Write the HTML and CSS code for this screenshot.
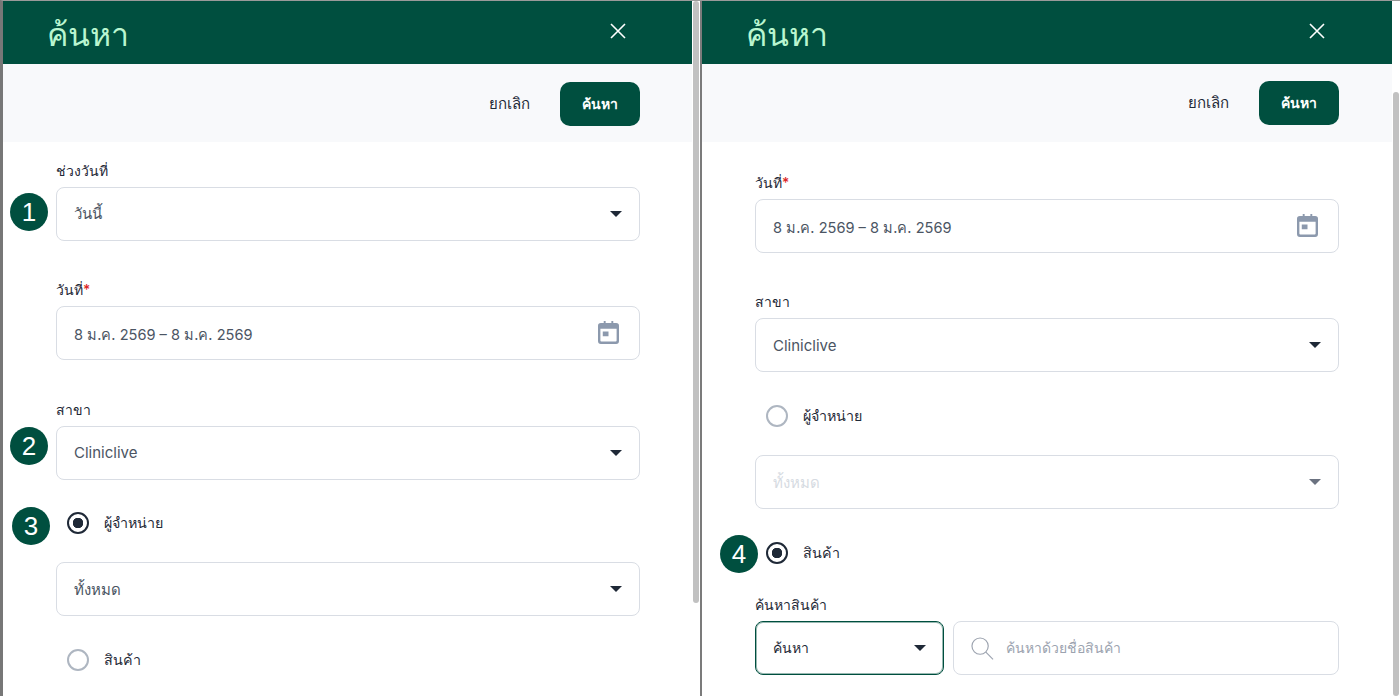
FILE: index.html
```html
<!DOCTYPE html>
<html lang="th">
<head>
<meta charset="utf-8">
<title>ค้นหา</title>
<link rel="stylesheet" href="styles.css">
</head>
<body>
<svg class="defs" width="0" height="0">
  <symbol id="caret" viewBox="0 0 12 6"><path d="M0 0h12L6 6z"/></symbol>
  <symbol id="close" viewBox="0 0 18 18"><path d="M2 2l14 14M16 2L2 16" fill="none" stroke="currentColor" stroke-width="1.6"/></symbol>
  <symbol id="cal" viewBox="0 0 22 24"><path fill-rule="evenodd" d="M3 2h3V0h2v2h6V0h2v2h3a3 3 0 0 1 3 3v16a3 3 0 0 1-3 3H3a3 3 0 0 1-3-3V5a3 3 0 0 1 3-3zM2.500 8v12.500a1 1 0 0 0 1 1h15a1 1 0 0 0 1-1V8zM5 11h6v5H5z"/></symbol>
  <symbol id="search" viewBox="0 0 24 24"><circle cx="9.500" cy="9.500" r="8.500" fill="none" stroke="currentColor" stroke-width="1.200"/><path d="M15.500 15.800l7.500 7.500" fill="none" stroke="currentColor" stroke-width="1.200"/></symbol>
</svg>
<main class="screen">
  <section class="panel panel-left">
    <div class="panel-main">
      <header class="head">
        <h1 class="title">ค้นหา</h1>
        <svg class="close"><use href="#close"/></svg>
      </header>
      <div class="toolbar">
        <span class="cancel">ยกเลิก</span>
        <span class="submit">ค้นหา</span>
      </div>
      <form class="form form-left">
        <div class="field">
          <span class="badge badge-1">1</span>
          <label class="label">ช่วงวันที่</label>
          <div class="control"><span>วันนี้</span><svg class="caret"><use href="#caret"/></svg></div>
        </div>
        <div class="field gap-date">
          <label class="label">วันที่<em class="req">*</em></label>
          <div class="control"><span class="nudge date">8 ม.ค. 2569 – 8 ม.ค. 2569</span><svg class="cal"><use href="#cal"/></svg></div>
        </div>
        <div class="field gap-branch">
          <span class="badge badge-2">2</span>
          <label class="label">สาขา</label>
          <div class="control"><span class="lift">Cliniclive</span><svg class="caret"><use href="#caret"/></svg></div>
        </div>
        <div class="radio-row row-first">
          <span class="badge badge-3">3</span>
          <span class="radio radio-on"></span><span class="radio-text">ผู้จำหน่าย</span>
        </div>
        <div class="control after-radio"><span class="nudge">ทั้งหมด</span><svg class="caret"><use href="#caret"/></svg></div>
        <div class="radio-row row-second">
          <span class="radio"></span><span class="radio-text">สินค้า</span>
        </div>
      </form>
    </div>
    <div class="scroll"><div class="thumb thumb-left"></div></div>
  </section>
  <div class="divider"></div>
  <section class="panel panel-right">
    <div class="panel-main">
      <header class="head head-right">
        <h1 class="title">ค้นหา</h1>
        <svg class="close"><use href="#close"/></svg>
      </header>
      <div class="toolbar">
        <span class="cancel">ยกเลิก</span>
        <span class="submit">ค้นหา</span>
      </div>
      <form class="form form-right">
        <div class="field">
          <label class="label">วันที่<em class="req">*</em></label>
          <div class="control"><span class="nudge date">8 ม.ค. 2569 – 8 ม.ค. 2569</span><svg class="cal"><use href="#cal"/></svg></div>
        </div>
        <div class="field gap-r-branch">
          <label class="label">สาขา</label>
          <div class="control"><span>Cliniclive</span><svg class="caret"><use href="#caret"/></svg></div>
        </div>
        <div class="radio-row row-r-first">
          <span class="radio"></span><span class="radio-text">ผู้จำหน่าย</span>
        </div>
        <div class="control disabled after-r-radio"><span class="nudge">ทั้งหมด</span><svg class="caret"><use href="#caret"/></svg></div>
        <div class="radio-row row-r-second">
          <span class="badge badge-4">4</span>
          <span class="radio radio-on"></span><span class="radio-text">สินค้า</span>
        </div>
        <div class="field gap-product">
          <label class="label">ค้นหาสินค้า</label>
          <div class="search-row">
            <div class="control focus"><span>ค้นหา</span><svg class="caret"><use href="#caret"/></svg></div>
            <div class="control search-box"><svg class="search"><use href="#search"/></svg><span>ค้นหาด้วยชื่อสินค้า</span></div>
          </div>
        </div>
      </form>
    </div>
    <div class="scroll"><div class="thumb thumb-right"></div></div>
  </section>
</main>
</body>
</html>
```
FILE: styles.css
```css
* { box-sizing: border-box; }
html, body { margin: 0; height: 100%; overflow: hidden; background: #fff; }
body { font-family: Inter, "Noto Sans", sans-serif; color: #1f2937; }
.defs { position: absolute; }
.screen { display: flex; height: 696px; border-top: 1px solid #9a9a9a; border-left: 3px solid #777; }
.panel { display: flex; height: 100%; }
.panel-left { width: 696px; }
.panel-right { width: 698px; }
.panel-main { flex: 1; min-width: 0; display: flex; flex-direction: column; }
.divider { width: 2px; background: #7b7b7b; margin-left: 1px; }
.scroll { width: 8px; background: #fff; flex: none; padding-left: 1px; }
.panel-left .scroll { width: 7px; }
.thumb { width: 6px; background: #c1c1c1; border-radius: 3px; }
.thumb-left { height: 602px; }
.thumb-right { margin-top: 91px; height: 604px; }
.head { height: 63px; flex: none; background: #004f3f; display: flex; align-items: center; justify-content: space-between; padding: 0 65px 0 44px; }
.head-right { padding-right: 66px; }
.title { margin: 4px 0 0; font-size: 32px; font-weight: 500; color: #b9f6d0; line-height: 1; }
.close { width: 18px; height: 18px; color: #fff; margin-top: -3px; }
.toolbar { height: 78px; flex: none; background: #f8f9fb; display: flex; align-items: center; justify-content: flex-end; padding-right: 53px; gap: 30px; }
.panel-left .toolbar { padding: 2px 52px 0 0; }
.cancel { font-size: 15px; font-weight: 500; color: #1f2937; }
.submit { width: 80px; height: 44px; background: #004f3f; border-radius: 10px; color: #fff; font-size: 14px; font-weight: 600; display: flex; align-items: center; justify-content: center; }
.form { padding: 0 53px; }
.form-left { padding: 17px 52px 0 53px; }
.form-right { padding-top: 29px; }
.field { position: relative; }
.label { display: block; font-size: 14px; line-height: 24px; height: 28px; font-weight: 500; color: #1f2937; }
.req { color: #dc2626; font-style: normal; }
.control { height: 54px; border: 1px solid #d9dde4; border-radius: 8px; background: #fff; display: flex; align-items: center; justify-content: space-between; padding: 0 16px 0 17px; font-size: 15px; color: #4b5563; }
.nudge { padding-top: 2px; }
.lift { padding-bottom: 2px; }
.date { font-size: 14.600px; }
.caret { width: 12px; height: 6px; fill: #1f2937; flex: none; margin-right: 1px; }
.cal { width: 21px; height: 23px; fill: #8c99ad; flex: none; margin-right: 4px; margin-top: -2px; }
.gap-date { margin-top: 37px; }
.gap-branch { margin-top: 38px; }
.gap-r-branch { margin-top: 37px; }
.radio-row { position: relative; display: flex; align-items: center; height: 24px; padding-left: 11px; }
.row-first { margin-top: 31px; }
.after-radio { margin-top: 27px; }
.row-second { margin-top: 32px; }
.row-r-first { margin-top: 32px; }
.after-r-radio { margin-top: 27px; }
.row-r-second { margin-top: 32px; }
.radio { width: 22px; height: 22px; border-radius: 50%; border: 2px solid #aeb6c1; background: #fff; flex: none; }
.radio-on { border-color: #1f2937; background: radial-gradient(circle, #1f2937 0 5px, #fff 5.500px); }
.radio-text { margin-left: 15px; font-size: 14.300px; font-weight: 500; color: #1f2937; }
.disabled { color: #d6dbe2; }
.disabled .caret { fill: #6b7280; }
.gap-product { margin-top: 28px; }
.search-row { display: flex; gap: 9px; }
.focus { width: 189px; flex: none; border-color: #004f3f; box-shadow: inset 0 0 0 1px rgba(0, 79, 63, 0.4); color: #1f2937; font-size: 14px; }
.search-box { flex: 1; justify-content: flex-start; gap: 12px; color: #9ca3af; font-size: 14px; }
.search { width: 23px; height: 23px; color: #9ca3af; flex: none; }
.badge { position: absolute; width: 38px; height: 38px; border-radius: 50%; background: #004f3f; color: #fff; font-size: 26px; display: flex; align-items: center; justify-content: center; font-family: "Liberation Sans", sans-serif; }
.badge-1 { left: -46px; top: 34px; }
.badge-2 { left: -46px; top: 29px; }
.badge-3 { left: -44px; top: -4px; }
.badge-4 { left: -35px; top: -6px; }
```
